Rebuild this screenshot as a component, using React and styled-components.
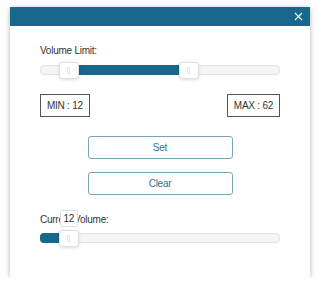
import React from 'react';
import styled, { createGlobalStyle } from 'styled-components';

const GlobalStyle = createGlobalStyle`
  html, body {
    margin: 0;
    padding: 0;
    background: #ffffff;
    font-family: "Liberation Sans", Arial, sans-serif;
  }
`;

const Page = styled.div`
  padding: 7px 0 0 10px;
`;

const Dialog = styled.div`
  width: 300px;
  height: 270px;
  background: #ffffff;
  box-shadow: 0 1px 5px rgba(0, 0, 0, 0.3);
  display: flex;
  flex-direction: column;
`;

const Header = styled.div`
  height: 19px;
  background: #17688b;
  display: flex;
  align-items: center;
  justify-content: flex-end;
  padding-right: 7px;
`;

const CloseButton = styled.button`
  border: none;
  background: none;
  padding: 0;
  width: 9px;
  height: 9px;
  display: flex;
  cursor: pointer;
`;

const Body = styled.div`
  padding: 18px 30px 0;
  display: flex;
  flex-direction: column;
`;

const Label = styled.div`
  font-size: 10px;
  letter-spacing: -0.25px;
  line-height: 14px;
  color: #333333;
  margin-top: ${(p) => p.$top || 0}px;
`;

const SliderWrap = styled.div`
  position: relative;
  height: 17px;
  margin-top: ${(p) => p.$top || 0}px;
`;

const Track = styled.div`
  position: absolute;
  left: 0;
  right: 0;
  top: 3px;
  height: 10px;
  box-sizing: border-box;
  background: #f5f5f5;
  border: 1px solid #e4e4e4;
  border-radius: 4px;
`;

const Fill = styled.div`
  position: absolute;
  top: 3px;
  height: 10px;
  background: #17688b;
  border-radius: ${(p) => (p.$fromStart ? '4px 0 0 4px' : '0')};
`;

const Handle = styled.div`
  position: absolute;
  top: 0;
  width: 20px;
  height: 17px;
  margin-left: -10px;
  box-sizing: border-box;
  background: #ffffff;
  border: 1px solid #e0e0e0;
  border-radius: 3px;
  box-shadow: 0 1px 3px rgba(0, 0, 0, 0.12);
  display: flex;
  align-items: center;
  justify-content: center;

  &::after {
    content: '';
    width: 3px;
    height: 7px;
    box-sizing: border-box;
    border: 1px solid #e6e6e6;
  }
`;

const Tip = styled.div`
  position: absolute;
  top: -20px;
  width: 18px;
  height: 17px;
  margin-left: -9px;
  box-sizing: border-box;
  background: #ffffff;
  border: 1px solid #dedede;
  border-radius: 2px;
  font-size: 10px;
  letter-spacing: -0.25px;
  line-height: 15px;
  text-align: center;
  color: #333333;
`;

const ValueRow = styled.div`
  display: flex;
  justify-content: space-between;
  margin-top: 15px;
`;

const ValueBox = styled.div`
  height: 23px;
  padding: 0 6px;
  box-sizing: border-box;
  border: 1px solid #555555;
  font-size: 10px;
  letter-spacing: -0.25px;
  line-height: 21px;
  color: #333333;
`;

const Buttons = styled.div`
  display: flex;
  flex-direction: column;
  align-items: center;
  gap: 13px;
  margin-top: 19px;
`;

const Button = styled.button`
  width: 145px;
  height: 23px;
  background: #ffffff;
  border: 1px solid #77a5ba;
  border-radius: 3px;
  color: #2f6f8d;
  font-family: "Liberation Sans", Arial, sans-serif;
  font-size: 10px;
  letter-spacing: -0.25px;
  cursor: pointer;
`;

const pct = (v) => `${v}%`;

const RangeSlider = ({ min, max, top }) => (
  <SliderWrap $top={top}>
    <Track />
    <Fill style={{ left: pct(min), width: pct(max - min) }} />
    <Handle style={{ left: pct(min) }} />
    <Handle style={{ left: pct(max) }} />
  </SliderWrap>
);

const SingleSlider = ({ value, top }) => (
  <SliderWrap $top={top}>
    <Track />
    <Fill $fromStart style={{ left: 0, width: pct(value) }} />
    <Handle style={{ left: pct(value) }} />
    <Tip style={{ left: pct(value) }}>{value}</Tip>
  </SliderWrap>
);

const App = () => {
  const min = 12;
  const max = 62;
  const current = 12;
  return (
    <>
      <GlobalStyle />
      <Page>
        <Dialog>
          <Header>
            <CloseButton aria-label="close">
              <svg width="9" height="9" viewBox="0 0 9 9">
                <path d="M1 1 L8 8 M8 1 L1 8" stroke="#ffffff" strokeWidth="1.1" />
              </svg>
            </CloseButton>
          </Header>
          <Body>
            <Label>Volume Limit:</Label>
            <RangeSlider min={min} max={max} top={4} />
            <ValueRow>
              <ValueBox>MIN : {min}</ValueBox>
              <ValueBox>MAX : {max}</ValueBox>
            </ValueRow>
            <Buttons>
              <Button>Set</Button>
              <Button>Clear</Button>
            </Buttons>
            <Label $top={18}>Current Volume:</Label>
            <SingleSlider value={current} top={3} />
          </Body>
        </Dialog>
      </Page>
    </>
  );
};

export default App;
